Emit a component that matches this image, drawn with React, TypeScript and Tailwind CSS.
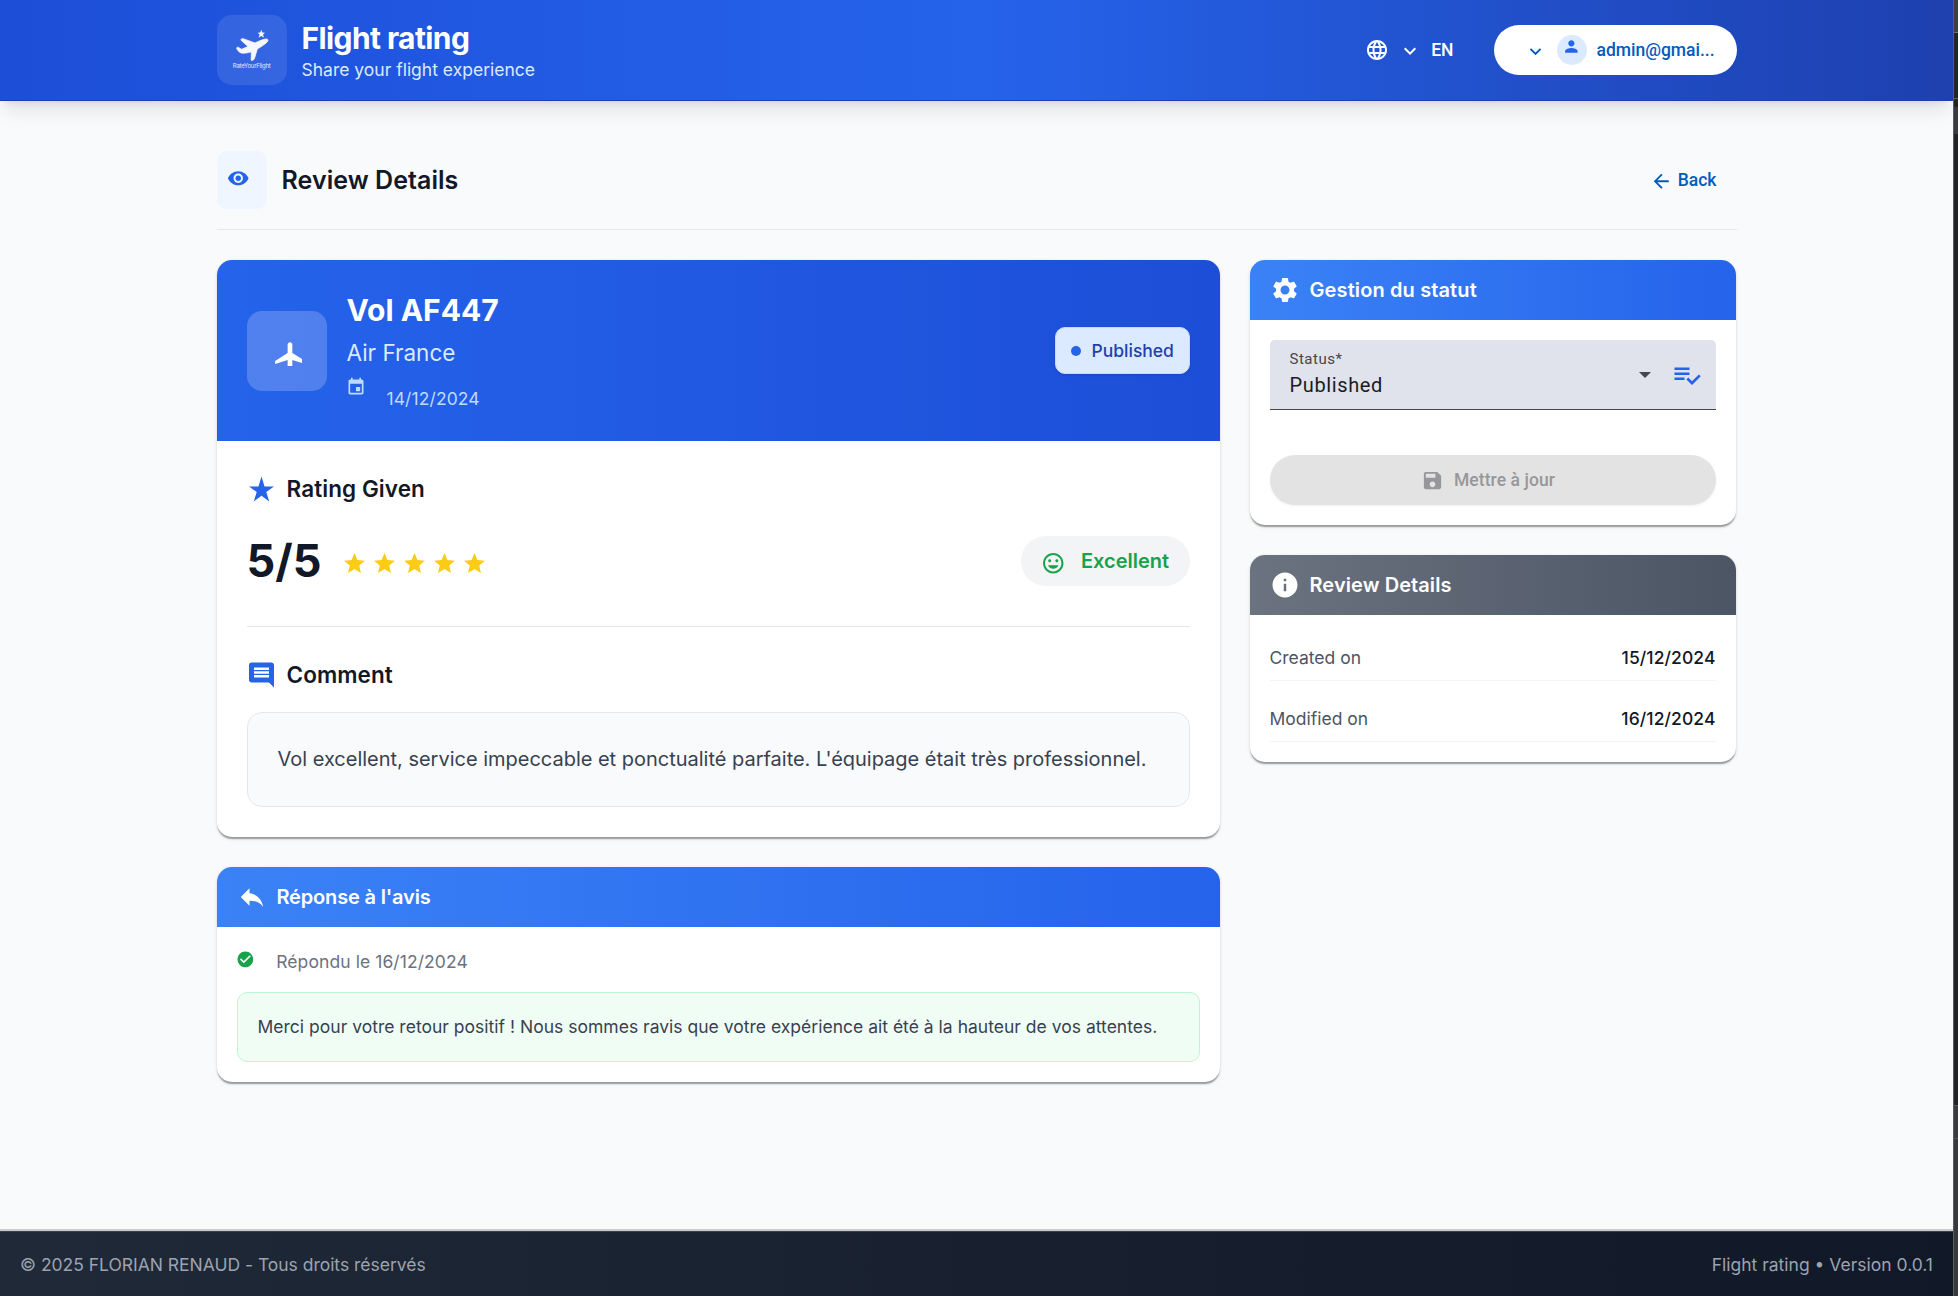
import React from "react";

type IconProps = { d: string; className?: string };

function Icon({ d, className = "" }: IconProps) {
  return (
    <svg viewBox="0 0 24 24" fill="currentColor" className={`block shrink-0 ${className}`}>
      <path d={d} />
    </svg>
  );
}

const P = {
  globe:
    "M11.99 2C6.47 2 2 6.48 2 12s4.47 10 9.99 10C17.52 22 22 17.52 22 12S17.52 2 11.99 2zm6.93 6h-2.95a15.65 15.65 0 0 0-1.38-3.56A8.03 8.03 0 0 1 18.92 8zM12 4.04c.83 1.2 1.48 2.53 1.91 3.96h-3.82c.43-1.43 1.08-2.76 1.91-3.96zM4.26 14C4.1 13.36 4 12.69 4 12s.1-1.36.26-2h3.38c-.08.66-.14 1.32-.14 2s.06 1.34.14 2H4.26zm.82 2h2.95c.32 1.25.78 2.45 1.38 3.56A7.987 7.987 0 0 1 5.08 16zm2.95-8H5.08a7.987 7.987 0 0 1 4.33-3.56A15.65 15.65 0 0 0 8.03 8zM12 19.96c-.83-1.2-1.48-2.53-1.91-3.96h3.82c-.43 1.43-1.08 2.76-1.91 3.96zM14.34 14H9.66c-.09-.66-.16-1.32-.16-2s.07-1.35.16-2h4.68c.09.65.16 1.32.16 2s-.07 1.34-.16 2zm.25 5.56c.6-1.11 1.06-2.31 1.38-3.56h2.95a8.03 8.03 0 0 1-4.33 3.56zM16.36 14c.08-.66.14-1.32.14-2s-.06-1.34-.14-2h3.38c.16.64.26 1.31.26 2s-.1 1.36-.26 2h-3.38z",
  expand: "M16.59 8.59 12 13.17 7.41 8.59 6 10l6 6 6-6z",
  person:
    "M12 12c2.21 0 4-1.79 4-4s-1.79-4-4-4-4 1.79-4 4 1.79 4 4 4zm0 2c-2.67 0-8 1.34-8 4v2h16v-2c0-2.66-5.33-4-8-4z",
  eye: "M12 4.5C7 4.5 2.73 7.61 1 12c1.73 4.39 6 7.5 11 7.5s9.27-3.11 11-7.5c-1.73-4.39-6-7.5-11-7.5zM12 17c-2.76 0-5-2.24-5-5s2.24-5 5-5 5 2.24 5 5-2.24 5-5 5zm0-8c-1.66 0-3 1.34-3 3s1.34 3 3 3 3-1.34 3-3-1.34-3-3-3z",
  back: "M20 11H7.83l5.59-5.59L12 4l-8 8 8 8 1.41-1.41L7.83 13H20v-2z",
  flight:
    "M21 16v-2l-8-5V3.5c0-.83-.67-1.5-1.5-1.5S10 2.67 10 3.5V9l-8 5v2l8-2.5V19l-2 1.5V22l3.5-1 3.5 1v-1.5L13 19v-5.5l8 2.5z",
  event:
    "M17 12h-5v5h5v-5zM16 1v2H8V1H6v2H5c-1.11 0-1.99.9-1.99 2L3 19c0 1.1.89 2 2 2h14c1.1 0 2-.9 2-2V5c0-1.1-.9-2-2-2h-1V1h-2zm3 18H5V8h14v11z",
  star: "M12 17.27 18.18 21l-1.64-7.03L22 9.24l-7.19-.61L12 2 9.19 8.63 2 9.24l5.46 4.73L5.82 21z",
  starRate: "M14.43 10 12 2l-2.43 8H2l6.18 4.41L5.83 22 12 17.31 18.18 22l-2.35-7.59L22 10z",
  smile:
    "M11.99 2C6.47 2 2 6.47 2 12s4.47 10 9.99 10S22 17.53 22 12 17.52 2 11.99 2zM12 20c-4.42 0-8-3.58-8-8s3.58-8 8-8 8 3.58 8 8-3.58 8-8 8zm3.5-9c.83 0 1.5-.67 1.5-1.5S16.33 8 15.5 8 14 8.67 14 9.5s.67 1.5 1.5 1.5zm-7 0c.83 0 1.5-.67 1.5-1.5S9.33 8 8.5 8 7 8.67 7 9.5 7.67 11 8.5 11zm3.5 6.5c2.33 0 4.31-1.46 5.11-3.5H6.89c.8 2.04 2.78 3.5 5.11 3.5z",
  comment:
    "M21.99 4c0-1.1-.89-2-1.99-2H4c-1.1 0-2 .9-2 2v12c0 1.1.9 2 2 2h14l4 4-.01-18zM18 14H6v-2h12v2zm0-3H6V9h12v2zm0-3H6V6h12v2z",
  reply: "M10 9V5l-7 7 7 7v-4.1c5 0 8.5 1.6 11 5.1-1-5-4-10-11-11z",
  check:
    "M12 2C6.48 2 2 6.48 2 12s4.48 10 10 10 10-4.48 10-10S17.52 2 12 2zm-2 15-5-5 1.41-1.41L10 14.17l7.59-7.59L19 8l-9 9z",
  gear: "M19.14 12.94c.04-.3.06-.61.06-.94 0-.32-.02-.64-.07-.94l2.03-1.58a.49.49 0 0 0 .12-.61l-1.92-3.32a.488.488 0 0 0-.59-.22l-2.39.96c-.5-.38-1.03-.7-1.62-.94l-.36-2.54a.484.484 0 0 0-.48-.41h-3.84c-.24 0-.43.17-.47.41l-.36 2.54c-.59.24-1.13.57-1.62.94l-2.39-.96c-.22-.08-.47 0-.59.22L2.74 8.87c-.12.21-.08.47.12.61l2.03 1.58c-.05.3-.09.63-.09.94s.02.64.07.94l-2.03 1.58a.49.49 0 0 0-.12.61l1.92 3.32c.12.22.37.29.59.22l2.39-.96c.5.38 1.03.7 1.62.94l.36 2.54c.05.24.24.41.48.41h3.84c.24 0 .44-.17.47-.41l.36-2.54c.59-.24 1.13-.56 1.62-.94l2.39.96c.22.08.47 0 .59-.22l1.92-3.32c.12-.22.07-.47-.12-.61l-2.01-1.58zM12 15.6c-1.98 0-3.6-1.62-3.6-3.6s1.62-3.6 3.6-3.6 3.6 1.62 3.6 3.6-1.62 3.6-3.6 3.6z",
  listCheck: "M14 10H2v2h12v-2zm0-4H2v2h12V6zM2 16h8v-2H2v2zm19.5-4.5L23 13l-6.99 7-4.51-4.5L13 14l3.01 3 5.49-5.5z",
  save: "M17 3H5c-1.11 0-2 .9-2 2v14c0 1.1.89 2 2 2h14c1.1 0 2-.9 2-2V7l-4-4zm-5 16c-1.66 0-3-1.34-3-3s1.34-3 3-3 3 1.34 3 3-1.34 3-3 3zm3-10H5V5h10v4z",
  info: "M12 2C6.48 2 2 6.48 2 12s4.48 10 10 10 10-4.48 10-10S17.52 2 12 2zm1 15h-2v-6h2v6zm0-8h-2V7h2v2z",
};

const CARD =
  "overflow-hidden rounded-[15px] bg-white shadow-[0_2.5px_1.25px_-1.25px_rgba(0,0,0,0.2),0_1.25px_1.25px_0_rgba(0,0,0,0.14),0_1.25px_3.75px_0_rgba(0,0,0,0.12)]";

function Logo() {
  return (
    <div className="flex size-[70px] shrink-0 items-center justify-center rounded-[15px] bg-white/10">
      <svg viewBox="0 0 60 60" className="size-[60px]">
        <path
          fill="#f5f8ff"
          stroke="#f5f8ff"
          strokeWidth="0.8"
          strokeLinejoin="round"
          d="M33 23 C38 20.600 42 19 44.500 19 C46.500 19.200 46.300 21 45 22.200 C42.500 24.600 38.500 27 35.300 29 L32.400 38.800 C31.600 40 30.300 40.700 29.200 40.300 L29.300 31.800 C25.500 33 22 33.500 19 32.900 C16.500 32 14.800 29.500 14.700 27.800 C15.500 26.900 16.500 27.100 17.300 27.900 L19.600 29.300 L26 26.500 L19 20.200 C18.700 18.900 19.800 18.500 21.200 18.700 Z"
        />
        <path fill="#f5f8ff" d="M39.300 9.800 40.300 12.500 43 12.700 41 14.600 42 17.600 39.300 15.900 36.600 17.600 37.600 14.600 35.700 12.700 38.300 12.500z" />
        <text
          x="29.800"
          y="48.300"
          textAnchor="middle"
          textLength="38"
          fontSize="6"
          fill="#e3ebfd"
          fontFamily="Inter, sans-serif"
        >
          RateYourFlight
        </text>
      </svg>
    </div>
  );
}

function Header() {
  return (
    <header className="relative z-10 h-[101px] border-b border-[#1e40af] bg-[linear-gradient(90deg,#1d4ed8_0%,#2563eb_50%,#1e40af_100%)] shadow-[0_12.5px_18.75px_-3.75px_rgba(0,0,0,0.1),0_5px_7.5px_-5px_rgba(0,0,0,0.1)]">
      <div className="mx-auto flex h-full w-[1520px] items-center justify-between">
        <div className="flex items-center gap-[15px]">
          <Logo />
          <div className="pt-[2px]">
            <div className="text-[30px] font-bold leading-[37px] tracking-[-0.6px] text-white">Flight rating</div>
            <div className="text-[17.5px] leading-[26px] text-[#dbeafe]">Share your flight experience</div>
          </div>
        </div>
        <div className="flex items-center">
          <div className="flex items-center text-[17.5px] font-medium text-white">
            <Icon d={P.globe} className="size-[24px]" />
            <Icon d={P.expand} className="ml-[9px] size-[24px] translate-y-px" />
            <span className="ml-[9px] font-[Roboto,sans-serif]">EN</span>
          </div>
          <div className="ml-[40px] flex h-[50px] w-[243px] items-center rounded-full bg-white text-[#005cbb]">
            <Icon d={P.expand} className="ml-[30px] size-[23px] translate-y-px" />
            <div className="ml-[10px] flex size-[30px] shrink-0 justify-center rounded-full bg-[#dbeafe] pt-[2px]">
              <Icon d={P.person} className="size-[18.75px] text-[#2563eb]" />
            </div>
            <span className="ml-[10px] text-[17.5px] font-medium font-[Roboto,sans-serif]">admin@gmai...</span>
          </div>
        </div>
      </div>
    </header>
  );
}

function PageTitle() {
  return (
    <div className="flex h-[79px] items-start justify-between border-b border-[#e5e7eb]">
      <div className="flex items-center gap-[15px]">
        <div className="h-[58px] w-[50px] rounded-[10px] bg-[#eff6ff] pl-[10px] pt-[16px]">
          <Icon d={P.eye} className="size-[22.5px] text-[#2563eb]" />
        </div>
        <h1 className="pt-[2px] text-[25px] font-semibold tracking-[0.05px] text-[#111827]">Review Details</h1>
      </div>
      <div className="flex h-[58px] items-center pr-[20px] text-[#005cbb]">
        <Icon d={P.back} className="size-[22.5px] translate-y-px" />
        <span className="ml-[5px] text-[17.5px] font-medium font-[Roboto,sans-serif]">Back</span>
      </div>
    </div>
  );
}

function SectionTitle({ d, text }: { d: string; text: string }) {
  return (
    <div className="flex h-[35px] items-center gap-[10px]">
      <Icon d={d} className="size-[30px] -translate-x-[0.5px] text-[#2563eb]" />
      <h3 className="text-[22.5px] font-semibold tracking-[0.08px] text-[#111827]">{text}</h3>
    </div>
  );
}

function ReviewCard() {
  return (
    <section className={`${CARD} h-[577px]`}>
      <div className="flex h-[181px] items-center justify-between bg-[linear-gradient(90deg,#2563eb,#1d4ed8)] px-[30px]">
        <div className="flex items-center gap-[20px]">
          <div className="flex size-[80px] items-center justify-center rounded-[15px] bg-white/20">
            <div className="size-[30px] overflow-hidden pt-[3px]">
              <Icon d={P.flight} className="size-[37.5px] text-white" />
            </div>
          </div>
          <div>
            <h2 className="text-[30px] font-bold leading-[40px] text-white">Vol AF447</h2>
            <p className="mt-[5px] text-[22.5px] leading-[35px] text-[#dbeafe]">Air France</p>
            <div className="flex h-[41px] text-[#bfdbfe]">
              <Icon d={P.event} className="-ml-px mt-[7px] size-[20px]" />
              <span className="ml-[21px] mt-[16px] text-[17.5px] leading-[25px] tracking-[0.1px]">14/12/2024</span>
            </div>
          </div>
        </div>
        <div className="flex h-[47px] w-[135px] items-center gap-[11px] rounded-[10px] border border-[#bfdbfe] bg-[#dbeafe] pl-[15px] text-[17.5px] font-medium text-[#1e40af] shadow-sm">
          <span className="size-[10px] rounded-full bg-[#2563eb]" />
          <span className="pt-px">Published</span>
        </div>
      </div>
      <div className="px-[30px] pt-[30px]">
        <SectionTitle d={P.starRate} text="Rating Given" />
        <div className="mt-[30px] flex h-[50px] items-center justify-between">
          <div className="flex items-center">
            <span className="w-[75px] text-[45px] font-bold leading-[50px] text-[#111827]">5/5</span>
            <div className="ml-[20px] flex gap-[5px] pt-[5px] text-[#facc15]">
              {[0, 1, 2, 3, 4].map((i) => (
                <Icon key={i} d={P.star} className="size-[25px]" />
              ))}
            </div>
          </div>
          <div className="flex h-[50px] w-[169px] items-center rounded-full bg-[#f3f4f6] pl-[20px] text-[#16a34a]">
            <Icon d={P.smile} className="size-[24.5px] translate-y-[2px]" />
            <span className="ml-[16px] text-[20px] font-semibold">Excellent</span>
          </div>
        </div>
        <div className="mt-[40px] border-t border-[#e5e7eb] pt-[30px]">
          <SectionTitle d={P.comment} text="Comment" />
          <div className="mt-[20px] flex h-[95px] items-center rounded-[15px] border border-[#e5e7eb] bg-[#f9fafb] px-[30px] pb-[2px] text-[20px] tracking-[-0.012px] text-[#374151]">
            Vol excellent, service impeccable et ponctualité parfaite. L'équipage était très professionnel.
          </div>
        </div>
      </div>
    </section>
  );
}

function CardHeader({ d, text, className }: { d: string; text: string; className: string }) {
  return (
    <div className={`flex h-[60px] items-center gap-[10px] px-[20px] text-white ${className}`}>
      <Icon d={d} className="size-[30px]" />
      <h3 className="text-[20px] font-semibold">{text}</h3>
    </div>
  );
}

const BLUE = "bg-[linear-gradient(90deg,#3b82f6,#2563eb)]";

function ReplyCard() {
  return (
    <section className={`${CARD} mt-[30px] h-[215px]`}>
      <CardHeader d={P.reply} text="Réponse à l'avis" className={`tracking-[-0.17px] ${BLUE}`} />
      <div className="px-[20px] pt-[20px]">
        <div className="flex h-[45px] text-[#6b7280]">
          <Icon d={P.check} className="mt-[3px] size-[18.75px] -translate-x-px text-[#16a34a]" />
          <span className="ml-[21px] mt-[2px] text-[17.5px] leading-[25px] tracking-[0.08px]">Répondu le 16/12/2024</span>
        </div>
        <div className="flex h-[70px] items-center rounded-[10px] border border-[#bbf7d0] bg-[#f0fdf4] px-[20px] text-[17.5px] tracking-[0.012px] text-[#374151]">
          Merci pour votre retour positif ! Nous sommes ravis que votre expérience ait été à la hauteur de vos attentes.
        </div>
      </div>
    </section>
  );
}

function StatusCard() {
  return (
    <section className={`${CARD} h-[265px]`}>
      <CardHeader d={P.gear} text="Gestion du statut" className={`tracking-[0.12px] ${BLUE}`} />
      <div className="p-[20px] font-[Roboto,sans-serif]">
        <div className="flex h-[70px] items-center rounded-t-[5px] border-b border-[#44474e] bg-[#e0e2ec] pl-[20px] pr-[14px]">
          <div className="flex-1">
            <div className="text-[15px] leading-[20px] tracking-[0.5px] text-[#44474e]">Status*</div>
            <div className="mt-px pb-px text-[20px] leading-[30px] tracking-[0.625px] text-[#1a1b1f]">Published</div>
          </div>
          <svg viewBox="0 0 12 6" className="h-[6px] w-[12px] text-[#44474e]">
            <path d="M0 0h12L6 6z" fill="currentColor" />
          </svg>
          <Icon d={P.listCheck} className="ml-[21px] size-[30px] text-[#2563eb]" />
        </div>
        <div className="mt-[45px] flex h-[50px] items-center justify-center rounded-full bg-[#e3e3e3] pr-[9px] text-[17.5px] font-medium tracking-[0.08px] text-[#97979a] shadow-[0_1px_3px_rgba(0,0,0,0.06)]">
          <Icon d={P.save} className="size-[23px]" />
          <span className="ml-[10px]">Mettre à jour</span>
        </div>
      </div>
    </section>
  );
}

function Row({ label, value }: { label: string; value: string }) {
  return (
    <div className="flex h-[46px] items-center justify-between border-b border-[#f3f4f6] pt-[2px] text-[17.5px]">
      <span className="text-[#4b5563]">{label}</span>
      <span className="font-medium tracking-[0.08px] text-[#111827]">{value}</span>
    </div>
  );
}

function DetailsCard() {
  return (
    <section className={`${CARD} mt-[30px] h-[207px]`}>
      <CardHeader
        d={P.info}
        text="Review Details"
        className="tracking-[0.08px] bg-[linear-gradient(90deg,#6b7280,#4b5563)]"
      />
      <div className="flex flex-col gap-[15px] px-[20px] pt-[20px]">
        <Row label="Created on" value="15/12/2024" />
        <Row label="Modified on" value="16/12/2024" />
      </div>
    </section>
  );
}

function Footer() {
  return (
    <footer className="flex h-[65px] items-center justify-between border-t border-[#374151] bg-[linear-gradient(90deg,#1f2937,#111827)] px-[20px] pt-[2px] text-[17.5px] text-[#9ca3af] shadow-[0_-2px_0_#cacbcb]">
      <span className="tracking-[-0.02px]">© 2025 FLORIAN RENAUD - Tous droits réservés</span>
      <span>Flight rating • Version 0.0.1</span>
    </footer>
  );
}

function WindowEdge() {
  return (
    <div className="flex flex-1 flex-col border-l border-[#5b5c60]">
      <div className="h-[33px] border-b border-[#6b6c6f] bg-[#3f3f41]" />
      <div className="h-[66px] border-b border-[#5b5c60]" />
      <div className="mt-[8px] h-[27px] bg-[#383a40]" />
      <div className="flex-1" />
      <div className="h-[34px] border-y border-[#55565a] bg-[#3a3b3f]" />
      <div className="h-[157px] bg-[#38393d]" />
    </div>
  );
}

export default function App() {
  return (
    <div className="flex h-[1296px] w-[1958px] overflow-hidden bg-[#222428] font-[Inter,sans-serif]">
      <div className="flex w-[1953px] shrink-0 flex-col overflow-hidden bg-[#f9fafb]">
        <Header />
        <main className="mx-auto w-[1520px] flex-1 pt-[50px]">
          <PageTitle />
          <div className="mt-[30px] flex gap-[30px]">
            <div className="w-[1003px]">
              <ReviewCard />
              <ReplyCard />
            </div>
            <div className="w-[486px]">
              <StatusCard />
              <DetailsCard />
            </div>
          </div>
        </main>
        <Footer />
      </div>
      <WindowEdge />
    </div>
  );
}
